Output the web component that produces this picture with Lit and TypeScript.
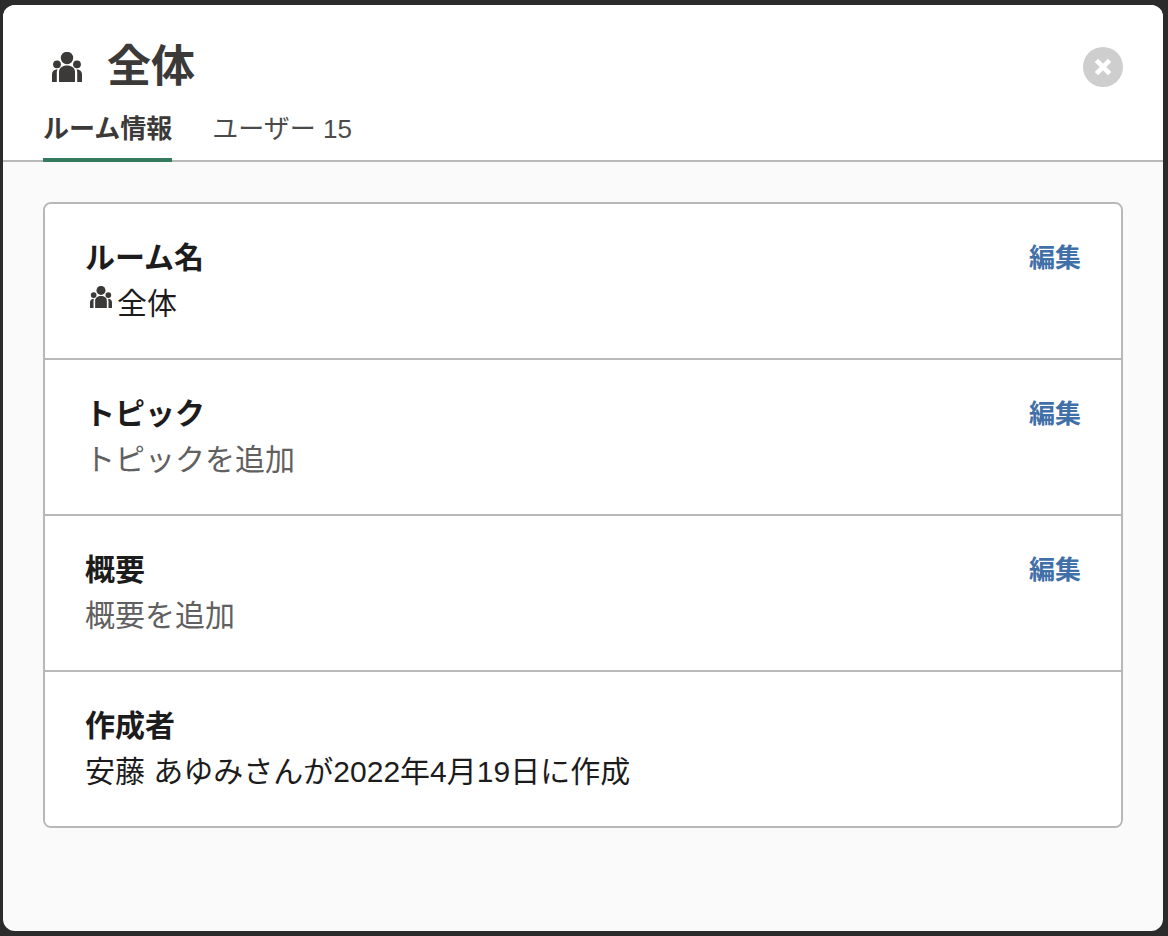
import { LitElement, html, css, svg } from "lit";
import { customElement, property, state } from "lit/decorators.js";

const groupIcon = html`<svg viewBox="9 9 30 30" width="100%" height="100%" fill="currentColor" aria-hidden="true">
  ${svg`
    <circle cx="24" cy="15" r="6.2" />
    <circle cx="14" cy="21.3" r="3.9" />
    <circle cx="34" cy="21.3" r="3.9" />
    <path d="M16 39V29c0-4 3.500-6.400 8-6.400s8 2.400 8 6.400v10z" />
    <path d="M9 39v-7.500c0-3.200 2-5 5.500-5.200c-.5 1-.7 2-.7 3.200V39z" />
    <path d="M39 39v-7.500c0-3.200-2-5-5.500-5.200c.5 1 .7 2 .7 3.200V39z" />`}
</svg>`;

@customElement("info-row")
class InfoRow extends LitElement {
  @property() heading = "";
  @property() value = "";
  @property({ type: Boolean }) editable = false;
  @property({ type: Boolean }) muted = false;
  @property({ type: Boolean }) group = false;

  static styles = css`
    :host {
      display: block;
    }
    .row {
      display: flex;
      justify-content: space-between;
      align-items: flex-start;
      gap: 24px;
      padding: 31px 40px;
      background: #fff;
    }
    .heading,
    .value {
      margin: 0;
      font-size: 30px;
      line-height: 46px;
      color: #1d1c1d;
    }
    .heading {
      font-weight: 700;
    }
    .value.muted {
      color: #616061;
    }
    .icon {
      display: inline-flex;
      width: 22px;
      height: 22px;
      margin: 0 5px;
      vertical-align: 6px;
      line-height: 0;
      color: #3b3a39;
    }
    .edit {
      padding: 0;
      border: 0;
      background: none;
      font: inherit;
      font-size: 26px;
      font-weight: 700;
      line-height: 46px;
      color: #4170a8;
      cursor: pointer;
      flex: none;
    }
  `;

  render() {
    return html`<section class="row">
      <div>
        <h2 class="heading">${this.heading}</h2>
        <p class="value ${this.muted ? "muted" : ""}">${this.group ? html`<span class="icon">${groupIcon}</span>` : ""}${this.value}</p>
      </div>
      ${this.editable ? html`<button class="edit" type="button" aria-label="${this.heading}を編集">編集</button>` : ""}
    </section>`;
  }
}

@customElement("app-root")
class AppRoot extends LitElement {
  @state() private tab = 0;

  private rows = [
    { heading: "ルーム名", value: "全体", editable: true, group: true },
    { heading: "トピック", value: "トピックを追加", editable: true, muted: true },
    { heading: "概要", value: "概要を追加", editable: true, muted: true },
    { heading: "作成者", value: "安藤 あゆみさんが2022年4月19日に作成" },
  ];

  static styles = css`
    :host {
      display: flex;
      box-sizing: border-box;
      min-height: 100vh;
      padding: 5px 5px 5px 3px;
      background: #2b2b2b;
      font-family: "Liberation Sans", "Noto Sans CJK JP", sans-serif;
    }
    .dialog {
      flex: 1;
      min-width: 0;
      border-radius: 12px;
      overflow: hidden;
      background: #fafafa;
    }
    .header {
      padding: 30px 40px 0;
      background: #fff;
      border-bottom: 2px solid #b8b8b8;
    }
    .top {
      display: flex;
      align-items: center;
      justify-content: space-between;
    }
    .title {
      display: flex;
      align-items: center;
      gap: 25px;
      margin: 0;
      padding-left: 9px;
      font-size: 44px;
      line-height: 64px;
      font-weight: 700;
      color: #3b3a39;
    }
    .icon {
      width: 30px;
      height: 30px;
      line-height: 0;
    }
    .close {
      width: 40px;
      height: 40px;
      padding: 0;
      border: 0;
      border-radius: 50%;
      background: #cecece;
      cursor: pointer;
    }
    .close svg {
      display: block;
    }
    .tabs {
      display: flex;
      gap: 40px;
      margin-bottom: -2px;
    }
    .tab {
      padding: 10px 0 9px;
      border: 0;
      border-bottom: 4px solid transparent;
      background: none;
      font-family: inherit;
      font-size: 26px;
      line-height: 40px;
      color: #4c4b4b;
      cursor: pointer;
    }
    .tab.active {
      font-weight: 700;
      color: #3b3a39;
      border-bottom-color: #347a5c;
    }
    .card {
      margin: 40px;
      border: 2px solid #b8b8b8;
      border-radius: 8px;
      overflow: hidden;
    }
    .item + .item {
      border-top: 2px solid #b8b8b8;
    }
  `;

  render() {
    return html`<main class="dialog">
      <header class="header">
        <div class="top">
          <h1 class="title"><span class="icon">${groupIcon}</span>全体</h1>
          <button class="close" type="button" aria-label="閉じる">
            <svg viewBox="0 0 40 40" width="40" height="40" aria-hidden="true">
              <path d="M13.400 13.400L26.600 26.600M26.600 13.400L13.400 26.600" stroke="#fff" stroke-width="4.800" />
            </svg>
          </button>
        </div>
        <div class="tabs" role="tablist">
          ${["ルーム情報", "ユーザー 15"].map(
            (label, i) => html`<button
              class="tab ${this.tab === i ? "active" : ""}"
              type="button"
              role="tab"
              aria-selected=${this.tab === i ? "true" : "false"}
              @click=${() => (this.tab = i)}
            >${label}</button>`
          )}
        </div>
      </header>
      <div class="card">
        ${this.rows.map(
          (r) => html`<info-row
            class="item"
            .heading=${r.heading}
            .value=${r.value}
            .editable=${!!r.editable}
            .muted=${!!r.muted}
            .group=${!!r.group}
          ></info-row>`
        )}
      </div>
    </main>`;
  }
}
